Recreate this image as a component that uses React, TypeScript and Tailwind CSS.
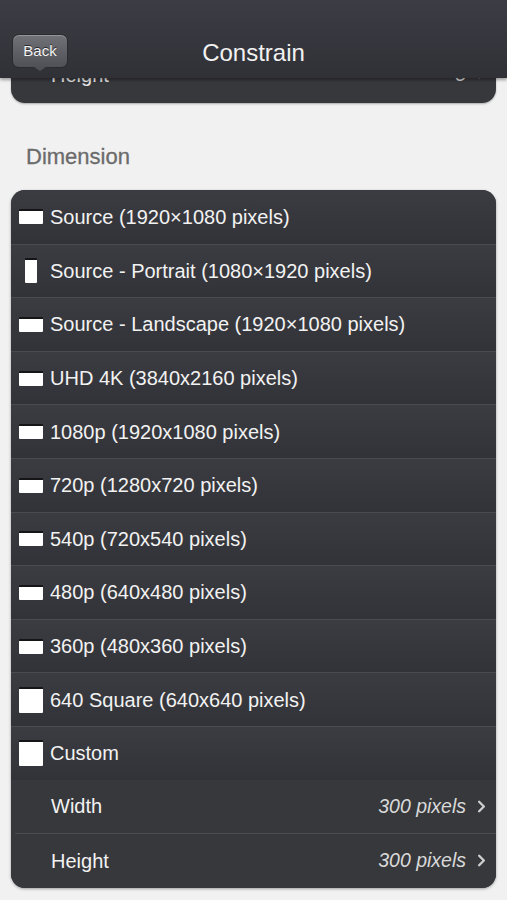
import { ChevronRight } from "lucide-react";

type Shape = "wide" | "tall" | "square";

const presets: { label: string; shape: Shape }[] = [
  { label: "Source (1920×1080 pixels)", shape: "wide" },
  { label: "Source - Portrait (1080×1920 pixels)", shape: "tall" },
  { label: "Source - Landscape (1920×1080 pixels)", shape: "wide" },
  { label: "UHD 4K (3840x2160 pixels)", shape: "wide" },
  { label: "1080p (1920x1080 pixels)", shape: "wide" },
  { label: "720p (1280x720 pixels)", shape: "wide" },
  { label: "540p (720x540 pixels)", shape: "wide" },
  { label: "480p (640x480 pixels)", shape: "wide" },
  { label: "360p (480x360 pixels)", shape: "wide" },
  { label: "640 Square (640x640 pixels)", shape: "square" },
  { label: "Custom", shape: "square" },
];

function ShapeIcon({ shape }: { shape: Shape }) {
  // white frame with a dark rim on top, like the thumbnails in the app
  if (shape === "tall")
    return (
      <div className="w-6 flex justify-center">
        <div className="w-[12px] h-[25px] bg-white border-t-2 border-[#151518] rounded-[1px]" />
      </div>
    );
  if (shape === "square")
    return <div className="w-6 h-[26px] bg-white border-t-2 border-[#151518] rounded-[1px]" />;
  return <div className="w-6 h-[15px] bg-white border-t-2 border-[#151518] rounded-[1px]" />;
}

function PresetRow({ label, shape, first }: { label: string; shape: Shape; first?: boolean }) {
  return (
    <div
      className={
        "h-[53.6px] flex items-center gap-[7px] pl-[8px] bg-gradient-to-b from-[#3b3c41] to-[#323338] " +
        (first ? "" : "border-t border-[#4a4b50]")
      }
    >
      <ShapeIcon shape={shape} />
      <span className="text-[20px] text-[#f2f2f2]">{label}</span>
    </div>
  );
}

function ValueRow({ label, value }: { label: string; value: string }) {
  return (
    <div className="h-[53.6px] flex items-center pl-[40px] pr-[5px] bg-[#37383c]">
      <span className="flex-1 text-[20px] text-[#f2f2f2]">{label}</span>
      <span className="text-[19.5px] italic text-[#d9d9d9]">{value}</span>
      <ChevronRight className="w-[19px] h-[19px] ml-[6px] text-[#cfcfcf]" strokeWidth={3} />
    </div>
  );
}

export default function App() {
  return (
    <div
      className="w-[507px] h-[900px] overflow-hidden bg-[#f1f1f1]"
      style={{ fontFamily: '"Liberation Sans", Arial, sans-serif' }}
    >
      {/* Barra de navegación */}
      <div className="relative z-10 h-[78px] bg-gradient-to-b from-[#3c3d44] to-[#303137] shadow-[0_2px_3px_rgba(0,0,0,0.35)] flex items-end pb-[10px] px-[12px]">
        <div className="relative w-[56px] h-[34px]">
          <div className="h-full rounded-[7px] bg-gradient-to-b from-[#717277] to-[#505156] border border-[#2a2b2f] shadow-[inset_0_1px_0_rgba(255,255,255,0.25)] flex items-center justify-center">
            <span className="text-[15px] text-[#f4f4f4] [text-shadow:0_-1px_0_rgba(0,0,0,0.6)]">Back</span>
          </div>
          <div className="absolute left-1/2 -translate-x-1/2 -bottom-[3px] w-0 h-0 border-l-[6px] border-r-[6px] border-t-[4px] border-l-transparent border-r-transparent border-t-[#505156]" />
        </div>
        <div className="flex-1 text-center text-[24px] text-[#f2f2f2] pr-[56px] -mb-[3px]">Constrain</div>
      </div>

      {/* Tarjeta anterior, casi oculta bajo la barra */}
      <div className="-mt-[30px] mx-[11px] h-[55px] rounded-b-[14px] bg-[#37383c] shadow-[0_1px_2px_rgba(0,0,0,0.3)] flex items-start pl-[40px] pr-[5px] pt-[12px]">
        <span className="flex-1 text-[20px] text-[#e6e6e6]">Height</span>
        <span className="text-[19.5px] italic text-[#d9d9d9]">5</span>
        <ChevronRight className="w-[19px] h-[19px] ml-[6px] mt-[3px] text-[#cfcfcf]" strokeWidth={3} />
      </div>

      <div className="pl-[26px] pt-[40px] pb-[19px] text-[22px] leading-[28px] text-[#6b6b6b] [-webkit-text-stroke:0.3px_#6b6b6b]">Dimension</div>

      <div className="mx-[11px] rounded-[14px] overflow-hidden bg-[#36373c] shadow-[0_1px_3px_rgba(0,0,0,0.35)]">
        {presets.map((p, i) => (
          <PresetRow key={p.label} label={p.label} shape={p.shape} first={i === 0} />
        ))}
        <ValueRow label="Width" value="300 pixels" />
        <div className="ml-[4px] h-px bg-[#4a4b50]" />
        <ValueRow label="Height" value="300 pixels" />
      </div>
    </div>
  );
}
